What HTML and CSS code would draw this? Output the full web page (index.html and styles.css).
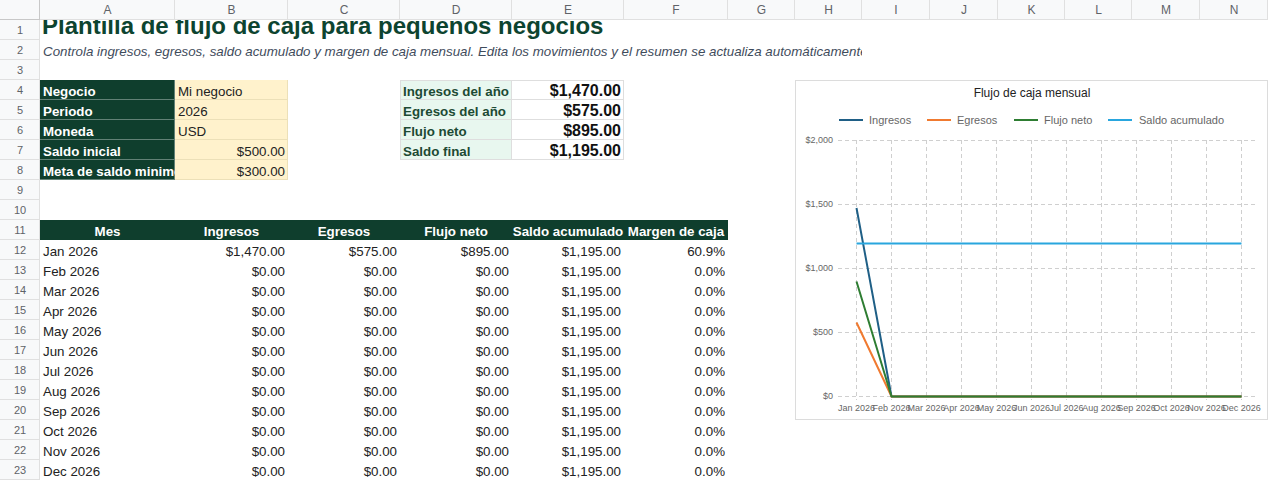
FILE: index.html
```html
<!DOCTYPE html>
<html lang="es">
<head>
<meta charset="utf-8">
<title>Plantilla de flujo de caja</title>
<link rel="stylesheet" href="styles.css">
</head>
<body>
<div class="sheet">
  <div class="hdr">
    <div class="corner"></div>
    <div>A</div><div>B</div><div>C</div><div>D</div><div>E</div><div>F</div><div>G</div>
    <div>H</div><div>I</div><div>J</div><div>K</div><div>L</div><div>M</div><div>N</div>
  </div>

  <div class="r"><div class="rn">1</div><div class="c title">Plantilla de flujo de caja para pequeños negocios</div></div>
  <div class="r"><div class="rn">2</div><div class="c sub">Controla ingresos, egresos, saldo acumulado y margen de caja mensual. Edita los movimientos y el resumen se actualiza automáticamente</div></div>
  <div class="r"><div class="rn">3</div></div>

  <div class="r"><div class="rn">4</div><div class="c lab">Negocio</div><div class="c inp">Mi negocio</div><div class="c"></div><div class="c slab top">Ingresos del año</div><div class="c sval top">$1,470.00</div></div>
  <div class="r"><div class="rn">5</div><div class="c lab">Periodo</div><div class="c inp">2026</div><div class="c"></div><div class="c slab">Egresos del año</div><div class="c sval">$575.00</div></div>
  <div class="r"><div class="rn">6</div><div class="c lab">Moneda</div><div class="c inp">USD</div><div class="c"></div><div class="c slab">Flujo neto</div><div class="c sval">$895.00</div></div>
  <div class="r"><div class="rn">7</div><div class="c lab">Saldo inicial</div><div class="c inp num">$500.00</div><div class="c"></div><div class="c slab">Saldo final</div><div class="c sval">$1,195.00</div></div>
  <div class="r"><div class="rn">8</div><div class="c lab">Meta de saldo minimo</div><div class="c inp num">$300.00</div></div>
  <div class="r"><div class="rn">9</div></div>
  <div class="r"><div class="rn">10</div></div>

  <div class="r"><div class="rn">11</div><div class="c th">Mes</div><div class="c th">Ingresos</div><div class="c th">Egresos</div><div class="c th">Flujo neto</div><div class="c th">Saldo acumulado</div><div class="c th">Margen de caja</div></div>
  <div class="r"><div class="rn">12</div><div class="c">Jan 2026</div><div class="c num">$1,470.00</div><div class="c num">$575.00</div><div class="c num">$895.00</div><div class="c num">$1,195.00</div><div class="c num">60.9%</div></div>
  <div class="r"><div class="rn">13</div><div class="c">Feb 2026</div><div class="c num">$0.00</div><div class="c num">$0.00</div><div class="c num">$0.00</div><div class="c num">$1,195.00</div><div class="c num">0.0%</div></div>
  <div class="r"><div class="rn">14</div><div class="c">Mar 2026</div><div class="c num">$0.00</div><div class="c num">$0.00</div><div class="c num">$0.00</div><div class="c num">$1,195.00</div><div class="c num">0.0%</div></div>
  <div class="r"><div class="rn">15</div><div class="c">Apr 2026</div><div class="c num">$0.00</div><div class="c num">$0.00</div><div class="c num">$0.00</div><div class="c num">$1,195.00</div><div class="c num">0.0%</div></div>
  <div class="r"><div class="rn">16</div><div class="c">May 2026</div><div class="c num">$0.00</div><div class="c num">$0.00</div><div class="c num">$0.00</div><div class="c num">$1,195.00</div><div class="c num">0.0%</div></div>
  <div class="r"><div class="rn">17</div><div class="c">Jun 2026</div><div class="c num">$0.00</div><div class="c num">$0.00</div><div class="c num">$0.00</div><div class="c num">$1,195.00</div><div class="c num">0.0%</div></div>
  <div class="r"><div class="rn">18</div><div class="c">Jul 2026</div><div class="c num">$0.00</div><div class="c num">$0.00</div><div class="c num">$0.00</div><div class="c num">$1,195.00</div><div class="c num">0.0%</div></div>
  <div class="r"><div class="rn">19</div><div class="c">Aug 2026</div><div class="c num">$0.00</div><div class="c num">$0.00</div><div class="c num">$0.00</div><div class="c num">$1,195.00</div><div class="c num">0.0%</div></div>
  <div class="r"><div class="rn">20</div><div class="c">Sep 2026</div><div class="c num">$0.00</div><div class="c num">$0.00</div><div class="c num">$0.00</div><div class="c num">$1,195.00</div><div class="c num">0.0%</div></div>
  <div class="r"><div class="rn">21</div><div class="c">Oct 2026</div><div class="c num">$0.00</div><div class="c num">$0.00</div><div class="c num">$0.00</div><div class="c num">$1,195.00</div><div class="c num">0.0%</div></div>
  <div class="r"><div class="rn">22</div><div class="c">Nov 2026</div><div class="c num">$0.00</div><div class="c num">$0.00</div><div class="c num">$0.00</div><div class="c num">$1,195.00</div><div class="c num">0.0%</div></div>
  <div class="r"><div class="rn">23</div><div class="c">Dec 2026</div><div class="c num">$0.00</div><div class="c num">$0.00</div><div class="c num">$0.00</div><div class="c num">$1,195.00</div><div class="c num">0.0%</div></div>

  <div class="chart">
    <svg width="473" height="340" viewBox="0 0 473 340" xmlns="http://www.w3.org/2000/svg">
      <rect x="0.5" y="0.5" width="472" height="339" fill="#fff" stroke="#dcdcdc"/>
      <text class="ctitle" x="237" y="17" text-anchor="middle">Flujo de caja mensual</text>
      <g class="legend">
        <line x1="44" y1="40" x2="68" y2="40" stroke="#1f5f86" stroke-width="2"/>
        <text x="74" y="44">Ingresos</text>
        <line x1="132" y1="40" x2="156" y2="40" stroke="#f07a30" stroke-width="2"/>
        <text x="162" y="44">Egresos</text>
        <line x1="219" y1="40" x2="243" y2="40" stroke="#2e7d32" stroke-width="2"/>
        <text x="249" y="44">Flujo neto</text>
        <line x1="313" y1="40" x2="337" y2="40" stroke="#29a6de" stroke-width="2"/>
        <text x="344" y="44">Saldo acumulado</text>
      </g>
      <g stroke="#cfcfcf" stroke-width="1" stroke-dasharray="4 3">
        <line x1="43" y1="60.5" x2="460" y2="60.5"/>
        <line x1="43" y1="124.5" x2="460" y2="124.5"/>
        <line x1="43" y1="188.5" x2="460" y2="188.5"/>
        <line x1="43" y1="252.5" x2="460" y2="252.5"/>
        <line x1="43" y1="316.5" x2="460" y2="316.5"/>
        <line x1="61.5" y1="60" x2="61.5" y2="320"/>
        <line x1="96.5" y1="60" x2="96.5" y2="320"/>
        <line x1="131.5" y1="60" x2="131.5" y2="320"/>
        <line x1="166.5" y1="60" x2="166.5" y2="320"/>
        <line x1="201.5" y1="60" x2="201.5" y2="320"/>
        <line x1="236.5" y1="60" x2="236.5" y2="320"/>
        <line x1="271.5" y1="60" x2="271.5" y2="320"/>
        <line x1="306.5" y1="60" x2="306.5" y2="320"/>
        <line x1="341.5" y1="60" x2="341.5" y2="320"/>
        <line x1="376.5" y1="60" x2="376.5" y2="320"/>
        <line x1="411.5" y1="60" x2="411.5" y2="320"/>
        <line x1="446.5" y1="60" x2="446.5" y2="320"/>
      </g>
      <g class="ylab" text-anchor="end">
        <text x="38" y="63">$2,000</text>
        <text x="38" y="127">$1,500</text>
        <text x="38" y="191">$1,000</text>
        <text x="38" y="255">$500</text>
        <text x="38" y="319">$0</text>
      </g>
      <g class="xlab" text-anchor="middle">
        <text x="61.5" y="331">Jan 2026</text>
        <text x="96.5" y="331">Feb 2026</text>
        <text x="131.5" y="331">Mar 2026</text>
        <text x="166.5" y="331">Apr 2026</text>
        <text x="201.5" y="331">May 2026</text>
        <text x="236.5" y="331">Jun 2026</text>
        <text x="271.5" y="331">Jul 2026</text>
        <text x="306.5" y="331">Aug 2026</text>
        <text x="341.5" y="331">Sep 2026</text>
        <text x="376.5" y="331">Oct 2026</text>
        <text x="411.5" y="331">Nov 2026</text>
        <text x="446.5" y="331">Dec 2026</text>
      </g>
      <g fill="none" stroke-width="2" stroke-linejoin="round">
        <polyline stroke="#1f5f86" points="61.5,128 96.5,316.5 446.5,316.5"/>
        <polyline stroke="#f07a30" points="61.5,242.5 96.5,316.5 446.5,316.5"/>
        <polyline stroke="#2e7d32" points="61.5,201.5 96.5,316.5 446.5,316.5"/>
        <polyline stroke="#29a6de" points="61.5,163.5 446.5,163.5"/>
      </g>
    </svg>
  </div>
</div>
</body>
</html>
```

FILE: styles.css
```css
* { box-sizing: border-box; }
html, body {
  margin: 0;
  padding: 0;
  background: #fff;
  overflow: hidden;
}
body {
  font-family: "Liberation Sans", Arial, sans-serif;
  color: #222;
  font-size: 13.33px;
}
.sheet {
  --cols: 40px 135px 113px 112px 112px 112px 104px 67px 67px 68px 68px 67px 67px 68px 68px;
  position: relative;
  width: 1268px;
  height: 480px;
  overflow: hidden;
}
.hdr {
  display: grid;
  grid-template-columns: var(--cols);
  height: 20px;
  background: #f8f9fa;
  box-shadow: inset 0 -1px 0 #c8c8c8;
}
.hdr > div {
  font-size: 12px;
  color: #5f6368;
  text-align: center;
  line-height: 20px;
  box-shadow: inset -1px -1px 0 #e0e0e0;
}
.hdr > .corner {
  box-shadow: inset -1px -1px 0 #c8c8c8;
}
.r {
  display: grid;
  grid-template-columns: var(--cols);
  height: 20px;
}
.rn {
  background: #f8f9fa;
  color: #5f6368;
  font-size: 11px;
  text-align: center;
  line-height: 20px;
  box-shadow: inset -1px -1px 0 #e0e0e0;
}
.c {
  height: 20px;
  padding: 3px 3px 0 3px;
  line-height: 17px;
  white-space: nowrap;
  overflow: hidden;
}
.num { text-align: right; }

.title {
  grid-column: 2 / -1;
  font-size: 24px;
  font-weight: bold;
  color: #0d4430;
  line-height: 24px;
  padding: 0 3px 2px 2px;
  display: flex;
  align-items: flex-end;
}
.sub {
  grid-column: 2 / 10;
  font-style: italic;
  color: #3f4c5c;
}
.lab {
  background: #0f3e2d;
  color: #fff;
  font-weight: bold;
  box-shadow: inset -1px -1px 0 rgba(255, 255, 255, 0.35);
}
.inp {
  background: #fff2cc;
  color: #222;
  box-shadow: inset -1px -1px 0 #ece0b8;
}
.slab {
  background: #e8f7ef;
  color: #1d4a34;
  font-weight: bold;
  box-shadow: inset 1px 0 0 #dedede, inset -1px -1px 0 #dedede;
}
.sval {
  text-align: right;
  font-weight: bold;
  font-size: 16px;
  color: #111;
  padding-top: 1px;
  line-height: 19px;
  box-shadow: inset -1px -1px 0 #dedede;
}
.slab.top { box-shadow: inset 1px 1px 0 #dedede, inset -1px -1px 0 #dedede; }
.sval.top { box-shadow: inset 0 1px 0 #dedede, inset -1px -1px 0 #dedede; }
.th {
  background: #0f3e2d;
  color: #fff;
  font-weight: bold;
  text-align: center;
  padding-left: 0;
  padding-right: 0;
}

.chart {
  position: absolute;
  left: 795px;
  top: 80px;
  width: 473px;
  height: 340px;
}
.chart svg { display: block; }
.chart text { font-family: "Liberation Sans", Arial, sans-serif; }
.ctitle { font-size: 12px; fill: #222; }
.legend text { font-size: 11px; fill: #666; }
.ylab text, .xlab text { font-size: 9px; fill: #666; }
```
